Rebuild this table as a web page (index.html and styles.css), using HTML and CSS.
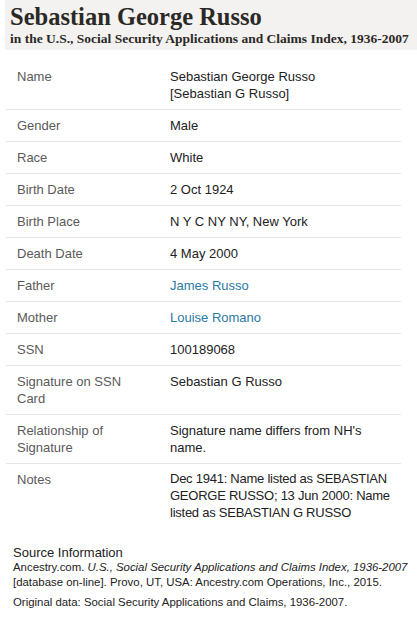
FILE: index.html
```html
<!DOCTYPE html>
<html>
<head>
<meta charset="utf-8">
<link rel="stylesheet" href="styles.css">
</head>
<body>
<div class="header">
  <h1 class="title">Sebastian George Russo</h1>
  <div class="subtitle">in the U.S., Social Security Applications and Claims Index, 1936-2007</div>
</div>
<div class="table">
  <div class="row"><div class="label">Name</div><div class="value">Sebastian George Russo<br>[Sebastian G Russo]</div></div>
  <div class="row"><div class="label">Gender</div><div class="value">Male</div></div>
  <div class="row"><div class="label">Race</div><div class="value">White</div></div>
  <div class="row"><div class="label">Birth Date</div><div class="value">2 Oct 1924</div></div>
  <div class="row"><div class="label">Birth Place</div><div class="value">N Y C NY NY, New York</div></div>
  <div class="row"><div class="label">Death Date</div><div class="value">4 May 2000</div></div>
  <div class="row"><div class="label">Father</div><div class="value"><a class="link" href="#">James Russo</a></div></div>
  <div class="row"><div class="label">Mother</div><div class="value"><a class="link" href="#">Louise Romano</a></div></div>
  <div class="row"><div class="label">SSN</div><div class="value">100189068</div></div>
  <div class="row"><div class="label">Signature on SSN Card</div><div class="value">Sebastian G Russo</div></div>
  <div class="row"><div class="label">Relationship of Signature</div><div class="value">Signature name differs from NH's name.</div></div>
  <div class="row last"><div class="label">Notes</div><div class="value notes">Dec 1941: Name listed as SEBASTIAN<br>GEORGE RUSSO; 13 Jun 2000: Name<br>listed as SEBASTIAN G RUSSO</div></div>
</div>
<div class="source">
  <div class="source-title">Source Information</div>
  <p class="source-text">Ancestry.com. <i>U.S., Social Security Applications and Claims Index, 1936-2007</i> [database on-line]. Provo, UT, USA: Ancestry.com Operations, Inc., 2015.</p>
  <p class="source-text">Original data: Social Security Applications and Claims, 1936-2007.</p>
</div>
</body>
</html>
```
FILE: styles.css
```css
html, body {
  margin: 0;
  padding: 0;
  background: #ffffff;
}
body {
  font-family: "Liberation Sans", Arial, sans-serif;
  color: #222222;
  width: 417px;
  overflow: hidden;
}
.header {
  margin-left: 5px;
  background: #f3f2f0;
  height: 50px;
  padding: 2.7px 0 0 5px;
  box-sizing: border-box;
}
.title {
  margin: 0;
  font-family: "Liberation Serif", "Times New Roman", serif;
  font-weight: bold;
  font-size: 24.5px;
  line-height: 28px;
  color: #2b2926;
}
.subtitle {
  font-family: "Liberation Serif", "Times New Roman", serif;
  font-weight: bold;
  font-size: 13.5px;
  line-height: 15px;
  color: #2b2926;
  white-space: nowrap;
}
.table {
  margin: 11px 16px 0 6px;
}
.row {
  display: grid;
  grid-template-columns: 153px 1fr;
  padding: 7px 0 7px 11px;
  border-bottom: 1px solid #e6e6e6;
  font-size: 13px;
  line-height: 17px;
}
.row.last {
  border-bottom: none;
}
.label {
  color: #5a5a5a;
  padding-right: 32px;
}
.value {
  color: #222222;
  padding-right: 8px;
}
.notes {
  white-space: nowrap;
  line-height: 16.8px;
  letter-spacing: -0.25px;
}
.link {
  color: #2a7aa3;
  text-decoration: none;
}
.source {
  margin: 18px 4px 0 13px;
}
.source-title {
  font-size: 13px;
  line-height: 14px;
  color: #222222;
}
.source-text {
  margin: 0 0 5px 0;
  font-size: 11.4px;
  line-height: 14.6px;
  color: #222222;
}
```
